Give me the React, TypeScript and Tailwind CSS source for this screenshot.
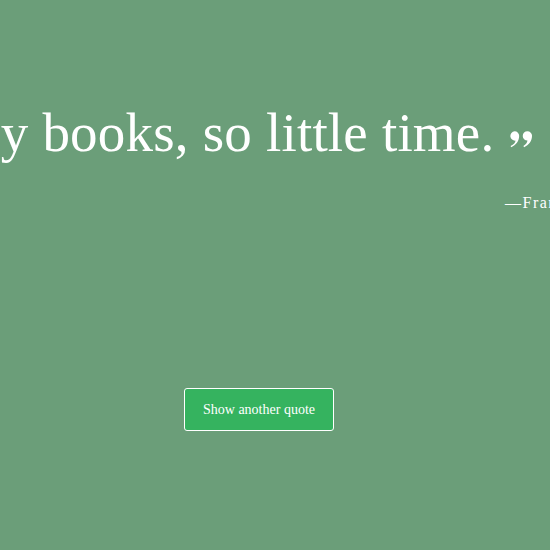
import { useState } from 'react';

const quotes = [
  { text: 'So many books, so little time.', author: 'Frank Zappa' },
  { text: 'A room without books is like a body without a soul.', author: 'Marcus Tullius Cicero' },
];

const QuoteMark = () => (
  <svg viewBox="0 0 24 18" className="mt-[13px] h-[17px] w-[22px] fill-white" aria-hidden="true">
    <path d="M5 0a5 5 0 0 1 5 5.2c0 5.4-3.6 9.9-8.6 12.3l-.8-1.4C4.3 14.5 5.9 12.5 6 10.2A5 5 0 1 1 5 0z" />
    <path d="M19 0a5 5 0 0 1 5 5.2c0 5.4-3.6 9.9-8.6 12.3l-.8-1.4c2.7-1.6 4.3-3.6 4.4-5.9A5 5 0 1 1 19 0z" />
  </svg>
);

const App = () => {
  const [index, setIndex] = useState(0);
  const quote = quotes[index];

  return (
    <div className="h-[550px] w-full overflow-hidden bg-[#6b9e79] font-['Liberation_Serif',serif] text-white">
      <div className="ml-[-167px] flex w-[820px] flex-col pt-[101px]">
        <div className="flex items-center gap-[16px] whitespace-nowrap">
          <p className="text-[55px] leading-[64px] tracking-[0.2px]">{quote.text}</p>
          <QuoteMark />
        </div>
        <p className="ml-[672px] mt-[26px] whitespace-nowrap text-[16px] tracking-[1.5px]">
          —{quote.author}
        </p>
      </div>

      <div className="mt-[173px] flex justify-center pr-[32px]">
        <button
          onClick={() => setIndex((index + 1) % quotes.length)}
          className="h-[43px] w-[150px] rounded-[3px] border-[1.5px] border-white bg-[#35b35f] text-[14px] text-white"
        >
          Show another quote
        </button>
      </div>
    </div>
  );
};

export default App;
